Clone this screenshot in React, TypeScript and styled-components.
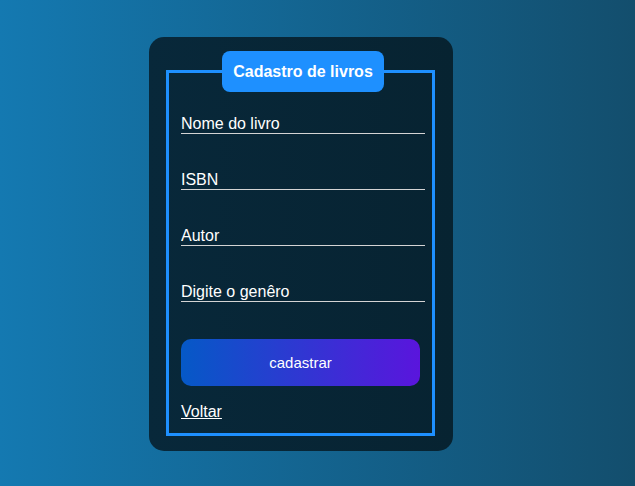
import React from "react";
import styled, { createGlobalStyle } from "styled-components";

const GlobalStyle = createGlobalStyle`
  html, body {
    margin: 0;
    padding: 0;
    height: 100%;
  }
  body {
    background: linear-gradient(to right, #1479b1, #134e6d);
    font-family: "Liberation Sans", Arial, sans-serif;
  }
  #root {
    min-height: 100%;
  }
`;

const Page = styled.div`
  display: flex;
  align-items: flex-start;
  padding: 37px 0 0 149px;
`;

const Card = styled.div`
  width: 304px;
  box-sizing: border-box;
  padding: 14px 18px 15px 17px;
  border-radius: 15px;
  background: linear-gradient(to right, #08283a, #072331);
`;

const Fieldset = styled.fieldset`
  margin: 0;
  padding: 0 7px 0 12px;
  min-width: 0;
  border: 3px solid #1e90ff;
  display: flex;
  flex-direction: column;
  align-items: flex-start;
`;

const Legend = styled.legend`
  margin: 0 auto;
  padding: 11px 11px;
  line-height: 19px;
  background: #1e90ff;
  color: #fff;
  font-weight: bold;
  font-size: 16px;
  border-radius: 8px;
`;

const Field = styled.input<{ $first?: boolean }>`
  width: 244px;
  box-sizing: border-box;
  margin: ${(p) => (p.$first ? "22px" : "36px")} 0 0;
  padding: 0;
  height: 20px;
  border: none;
  border-bottom: 1px solid #d4d4d4;
  background: transparent;
  color: #fff;
  font-family: "Liberation Sans", Arial, sans-serif;
  font-size: 16px;
  outline: none;
  &::placeholder {
    color: #fff;
    opacity: 1;
  }
`;

const Submit = styled.button`
  margin-top: 37px;
  width: 239px;
  height: 47px;
  border: none;
  border-radius: 10px;
  background: linear-gradient(to right, #0559c7, #5a15dd);
  color: #fff;
  font-family: "Liberation Sans", Arial, sans-serif;
  font-size: 15px;
  cursor: pointer;
`;

const Back = styled.a`
  margin: 16px 0 12px;
  color: #fff;
  font-size: 16px;
  line-height: 19px;
  text-decoration: underline;
`;

export default function App() {
  return (
    <>
      <GlobalStyle />
      <Page>
        <Card>
          <Fieldset>
            <Legend>Cadastro de livros</Legend>
            <Field $first placeholder="Nome do livro" />
            <Field placeholder="ISBN" />
            <Field placeholder="Autor" />
            <Field placeholder="Digite o genêro" />
            <Submit>cadastrar</Submit>
            <Back href="#">Voltar</Back>
          </Fieldset>
        </Card>
      </Page>
    </>
  );
}
